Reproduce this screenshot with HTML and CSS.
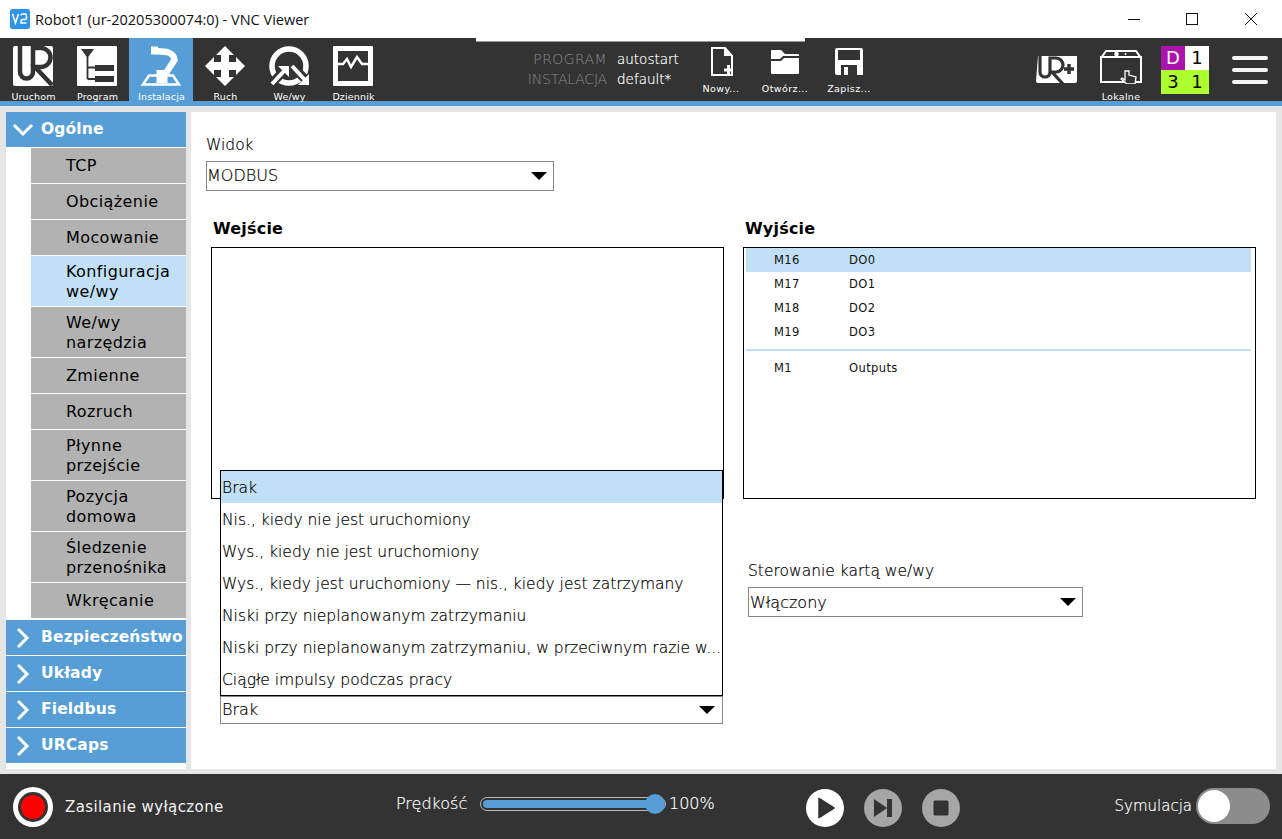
FILE: index.html
```html
<!DOCTYPE html>
<html lang="pl">
<head>
<meta charset="utf-8">
<title>Robot1 - VNC Viewer</title>
<link rel="stylesheet" href="styles.css">
</head>
<body>
<div class="window">
  <header class="titlebar">
    <svg class="vnc" viewBox="0 0 20 20"><rect width="20" height="20" rx="2.5" fill="#2f93e8"/><path d="M2.500 5l3 9 3-9" fill="none" stroke="#fff" stroke-width="1.600"/><path d="M11 6.500q0-1.500 1.500-1.500h2.500q1.500 0 1.500 1.500v2.500q0 1.500-1.500 1.500h-2.500q-1.500 0-1.500 1.500v2h5.500" fill="none" stroke="#fff" stroke-width="1.500"/></svg>
    <span class="wintitle">Robot1 (ur-20205300074:0) - VNC Viewer</span>
    <div class="winctl">
      <svg viewBox="0 0 12 12"><path d="M0 6.500h12" stroke="#111" fill="none"/></svg>
      <svg viewBox="0 0 12 12"><rect x=".5" y=".5" width="11" height="11" stroke="#111" fill="none"/></svg>
      <svg viewBox="0 0 12 12"><path d="M0 0l12 12M12 0L0 12" stroke="#111" fill="none"/></svg>
    </div>
  </header>

  <nav class="topbar">
    <div class="tab">
      <svg class="tabicon" viewBox="0 0 40 40"><rect width="40" height="40" rx="2" fill="#fff"/><path d="M7 0V26a6.500 6.500 0 0 0 13 0V2h8a9.500 9.500 0 0 1 0 19h-6l17 18" fill="none" stroke="#333" stroke-width="4.500"/></svg>
      <span>Uruchom</span>
    </div>
    <div class="tab">
      <svg class="tabicon" viewBox="0 0 40 40"><rect width="40" height="40" rx="1" fill="#fff"/><path d="M4 3h13l-6.500 9z" fill="#333"/><path d="M10.500 11v22M10.500 21.500h8M10.500 33h8" stroke="#333" stroke-width="1.800" fill="none"/><rect x="18" y="19" width="19" height="6" fill="#333"/><rect x="18" y="30" width="19" height="6" fill="#333"/></svg>
      <span>Program</span>
    </div>
    <div class="tab active">
      <svg class="tabicon" viewBox="0 0 40 40"><path d="M8 29.500h24l6 9H2z" fill="none" stroke="#fff" stroke-width="2.500"/><path d="M13.500 0.500v8" stroke="#fff" stroke-width="7" fill="none"/><path d="M14 5l12 1q7 2 7.500 8L25 27" stroke="#fff" stroke-width="6.500" fill="none"/><path d="M21 24v13" stroke="#fff" stroke-width="11" fill="none"/></svg>
      <span>Instalacja</span>
    </div>
    <div class="tab">
      <svg class="tabicon" viewBox="0 0 40 40"><path d="M20 0l9 9h-5v7h7v-5l9 9-9 9v-5h-7v7h5l-9 9-9-9h5v-7H9v5l-9-9 9-9v5h7V9h-5z" fill="#fff"/></svg>
      <span>Ruch</span>
    </div>
    <div class="tab">
      <svg class="tabicon" viewBox="0 0 40 40"><circle cx="20" cy="20" r="17" fill="none" stroke="#fff" stroke-width="5.500"/><path d="M3 37l13-13M23 20l13 13" stroke="#333" stroke-width="9" fill="none"/><path d="M3 38l13-14M23 20l13 14" stroke="#fff" stroke-width="4" fill="none"/><path d="M9 20h11v11zM40 39H29l11-11z" fill="#fff"/></svg>
      <span>We/wy</span>
    </div>
    <div class="tab">
      <svg class="tabicon" viewBox="0 0 40 40"><rect width="40" height="40" rx="1" fill="#fff"/><rect x="5" y="5" width="30" height="30" fill="#333"/><path d="M5 18h5l4-5 4 8 6-10 5 7h6" fill="none" stroke="#fff" stroke-width="2.500"/></svg>
      <span>Dziennik</span>
    </div>

    <div class="files">
      <div class="filenames">
        <span class="fk wide">PROGRAM</span><span class="fv">autostart</span>
        <span class="fk">INSTALACJA</span><span class="fv">default*</span>
      </div>
      <div class="fbtn">
        <svg viewBox="0 0 28 30"><path d="M5 1h13l7 8v19H5z" fill="none" stroke="#fff" stroke-width="2"/><path d="M17 1v8h8z" fill="#fff"/><path d="M17 23h9M21.500 18v11" stroke="#fff" stroke-width="3"/></svg>
        <span>Nowy...</span>
      </div>
      <div class="fbtn">
        <svg viewBox="0 0 28 30"><path d="M0 4q0-1 1-1h9l4 4h13q1 0 1 1v1H12l-3 3H0z" fill="#fff"/><path d="M0 14h10l3-3h15v15q0 1-1 1H1q-1 0-1-1z" fill="#fff"/></svg>
        <span>Otwórz...</span>
      </div>
      <div class="fbtn">
        <svg viewBox="0 0 28 30"><path d="M2 1h24q2 0 2 2v25H2q-2 0-2-2V3q0-2 2-2z" fill="#fff"/><rect x="3" y="3" width="22" height="10" fill="#333"/><rect x="6" y="18" width="16" height="10" fill="#333"/><rect x="9" y="20" width="4" height="8" fill="#fff"/></svg>
        <span>Zapisz...</span>
      </div>
    </div>

    <div class="rightctl">
      <svg class="urplus" viewBox="0 0 41 27"><path d="M2 0h39v25q0 2-2 2H2q-2 0-2-2z" fill="#fff"/><path d="M4 0V16a5 5 0 0 0 10 0V2h6a7 7 0 0 1 0 14h-4l11 12" fill="none" stroke="#333" stroke-width="3.200"/><path d="M33 8v10M28 13h10" stroke="#333" stroke-width="3.500"/></svg>
      <div class="local">
        <svg viewBox="0 0 42 34"><path d="M1 8L6 1h30l5 7" fill="none" stroke="#fff" stroke-width="2"/><rect x="1" y="7" width="40" height="25" fill="none" stroke="#fff" stroke-width="2"/><circle cx="16.500" cy="4" r="2.300" fill="#fff"/><circle cx="25.500" cy="4" r="1" fill="#fff"/><path d="M25 21v9l-3-2-1 1 6 5h8l1-7-7-2v-4z" fill="#333" stroke="#fff" stroke-width="1.300"/></svg>
        <span>Lokalne</span>
      </div>
      <div class="status">
        <span class="s-d">D</span><span class="s-w">1</span><span class="s-g">3</span><span class="s-g">1</span>
      </div>
      <div class="burger"><i></i><i></i><i></i></div>
    </div>
    <div class="vncbar"></div>
  </nav>
  <div class="strip"></div>

  <main class="main">
    <aside class="sidebar">
      <div class="group"><svg viewBox="0 0 22 14"><path d="M2 2l9 9 9-9" fill="none" stroke="#fff" stroke-width="3"/></svg>Ogólne</div>
      <div class="item">TCP</div>
      <div class="item">Obciążenie</div>
      <div class="item">Mocowanie</div>
      <div class="item tall sel">Konfiguracja<br>we/wy</div>
      <div class="item tall">We/wy<br>narzędzia</div>
      <div class="item">Zmienne</div>
      <div class="item">Rozruch</div>
      <div class="item tall">Płynne<br>przejście</div>
      <div class="item tall">Pozycja<br>domowa</div>
      <div class="item tall">Śledzenie<br>przenośnika</div>
      <div class="item">Wkręcanie</div>
      <div class="group first"><svg class="closed" viewBox="0 0 14 22"><path d="M2 2l9 9-9 9" fill="none" stroke="#fff" stroke-width="3"/></svg>Bezpieczeństwo</div>
      <div class="group"><svg class="closed" viewBox="0 0 14 22"><path d="M2 2l9 9-9 9" fill="none" stroke="#fff" stroke-width="3"/></svg>Układy</div>
      <div class="group"><svg class="closed" viewBox="0 0 14 22"><path d="M2 2l9 9-9 9" fill="none" stroke="#fff" stroke-width="3"/></svg>Fieldbus</div>
      <div class="group"><svg class="closed" viewBox="0 0 14 22"><path d="M2 2l9 9-9 9" fill="none" stroke="#fff" stroke-width="3"/></svg>URCaps</div>
    </aside>

    <section class="content">
      <label class="lbl">Widok</label>
      <div class="combo view">MODBUS<b class="arrow"></b></div>
      <div class="cols">
        <div class="col left">
          <h2>Wejście</h2>
          <div class="listbox"></div>
          <div class="combo under">Brak<b class="arrow"></b></div>
          <ul class="popup">
            <li class="hi">Brak</li>
            <li>Nis., kiedy nie jest uruchomiony</li>
            <li>Wys., kiedy nie jest uruchomiony</li>
            <li>Wys., kiedy jest uruchomiony — nis., kiedy jest zatrzymany</li>
            <li>Niski przy nieplanowanym zatrzymaniu</li>
            <li>Niski przy nieplanowanym zatrzymaniu, w przeciwnym razie w...</li>
            <li>Ciągłe impulsy podczas pracy</li>
          </ul>
        </div>
        <div class="col right">
          <h2>Wyjście</h2>
          <div class="listbox out">
            <div class="row hi"><span>M16</span><span>DO0</span></div>
            <div class="row"><span>M17</span><span>DO1</span></div>
            <div class="row"><span>M18</span><span>DO2</span></div>
            <div class="row"><span>M19</span><span>DO3</span></div>
            <div class="sep"></div>
            <div class="row"><span>M1</span><span>Outputs</span></div>
          </div>
          <label class="lbl ctl">Sterowanie kartą we/wy</label>
          <div class="combo ctlbox">Włączony<b class="arrow"></b></div>
        </div>
      </div>
    </section>
  </main>

  <footer class="bottom">
    <div class="power"><i></i></div>
    <span class="powertxt">Zasilanie wyłączone</span>
    <div class="speed">
      <span class="speedlbl">Prędkość</span>
      <div class="slider"><div class="fill"></div><div class="knob"></div></div>
      <span class="pct">100%</span>
    </div>
    <div class="play">
      <button class="pb on"><svg viewBox="0 0 38 38"><path d="M13 9.500l15 9.500-15 9.500z" fill="#333" stroke="#333" stroke-width="1.500" stroke-linejoin="round"/></svg></button>
      <button class="pb"><svg viewBox="0 0 38 38"><path d="M10 10l13 9-13 9z" fill="#333"/><rect x="23" y="10" width="5" height="18" fill="#333"/></svg></button>
      <button class="pb"><svg viewBox="0 0 38 38"><rect x="11.500" y="11.500" width="15" height="15" rx="1.500" fill="#333"/></svg></button>
    </div>
    <div class="sim"><span>Symulacja</span><div class="toggle"><i></i></div></div>
  </footer>
</div>
</body>
</html>
```
FILE: styles.css
```css
* { box-sizing: border-box; }
html, body { margin: 0; padding: 0; }
body { width: 1282px; height: 839px; overflow: hidden; font-family: "DejaVu Sans", sans-serif; color: #000; }
.window { width: 1282px; height: 839px; display: flex; flex-direction: column; background: #e6e6e6; }

.titlebar { height: 38px; background: #fff; display: flex; align-items: center; padding-left: 10px; }
.vnc { width: 20px; height: 20px; }
.wintitle { margin-left: 5px; font: 14.500px "Open Sans", sans-serif; color: #111; }
.winctl { margin-left: auto; display: flex; gap: 47px; padding-right: 25px; }
.winctl svg { width: 12px; height: 12px; display: block; }
.winctl svg:first-child { margin-right: -1px; }

.topbar { height: 63px; background: #333; display: flex; padding-left: 1px; position: relative; }
.vncbar { position: absolute; left: 476px; top: 0; width: 329px; height: 4px; background: #fff; border-bottom: 1px solid #999; }
.tab { width: 64px; height: 64px; display: flex; flex-direction: column; align-items: center; color: #fff; font-size: 9.500px; letter-spacing: .15px; padding-top: 8px; position: relative; }
.tab span { position: absolute; top: 53px; left: 1px; right: 0; text-align: center; line-height: 12px; }
.tabicon { width: 40px; height: 40px; display: block; }
.tab.active { background: #569ed5; }

.files { display: flex; margin-left: 108px; }
.filenames { display: grid; grid-template-columns: 114px auto; column-gap: 10px; font-size: 14px; font-weight: 200; line-height: 20px; padding-top: 11px; width: 196px; align-content: start; }
.fk { color: #8c8c8c; text-align: right; font-weight: 200; letter-spacing: -.2px; }
.fk.wide { letter-spacing: .4px; }
.fv { color: #fff; font-weight: 200; font-size: 13.500px; -webkit-text-stroke: .2px #fff; }
.fbtn { width: 64px; display: flex; flex-direction: column; align-items: center; color: #fff; font-size: 9.500px; letter-spacing: .4px; padding-top: 9px; }
.fbtn svg { width: 28px; height: 30px; display: block; }
.fbtn span { margin-top: 6px; line-height: 12px; }

.rightctl { position: absolute; right: 0; top: 0; width: 246px; height: 63px; display: flex; }
.urplus { width: 41px; height: 27px; margin: 18px 0 0 0; display: block; }
.local { width: 42px; margin-left: 23px; padding-top: 12px; color: #fff; font-size: 9.500px; display: flex; flex-direction: column; align-items: center; }
.local svg { width: 42px; height: 34px; display: block; flex: none; }
.local span { margin-top: 7px; line-height: 12px; letter-spacing: .3px; }
.status { width: 48px; height: 48px; margin: 8px 0 0 19px; display: grid; grid-template-columns: 24px 24px; grid-auto-rows: 24px; font-size: 18px; text-align: center; line-height: 24px; }
.s-d { background: #ac12ac; color: #fff; }
.s-w { background: #fff; color: #000; }
.s-g { background: #adff2f; color: #000; }
.burger { width: 36px; margin: 18px 0 0 23px; display: flex; flex-direction: column; gap: 8px; }
.burger i { display: block; height: 4px; border-radius: 2px; background: #f4f4f4; }

.strip { height: 5px; background: #569ed5; }

.main { flex: 1; min-height: 0; display: flex; gap: 5px; padding: 6px 6px 5px; }
.sidebar { width: 180px; background: #fff; flex: none; display: flex; flex-direction: column; align-items: stretch; }
.group { height: 35px; background: #569ed5; color: #fff; font-size: 15.500px; font-weight: 700; display: flex; align-items: center; padding: 0 0 2px 35px; margin-bottom: 1px; position: relative; letter-spacing: .15px; white-space: nowrap; }
.group.first { margin-top: 1px; }
.group svg { position: absolute; left: 6px; top: 11px; width: 22px; height: 14px; }
.group svg.closed { left: 10px; top: 7px; width: 14px; height: 22px; }
.item { height: 35px; margin: 0 0 1px 25px; background: #b2b2b2; color: #000; font-size: 16px; line-height: 20px; padding-left: 35px; display: flex; align-items: center; letter-spacing: .4px; }
.item.tall { height: 50px; display: block; padding-top: 6px; }
.item.sel { background: #c2e0f5; }

.content { flex: 1; background: #fff; padding: 23px 0 0 15px; position: relative; }
.lbl { display: block; font-size: 15.500px; font-weight: 200; line-height: 20px; color: #000; -webkit-text-stroke: .2px #000; }
.combo { position: relative; border: 1px solid #888; background: #fff; font-size: 16px; font-weight: 200; display: flex; align-items: center; padding: 0 0 2px 1px; color: #000; -webkit-text-stroke: .2px #000; }
.arrow { position: absolute; right: 6px; top: 50%; margin-top: -4px; width: 0; height: 0; border-style: solid; border-width: 8px 8px 0; border-color: #000 transparent transparent; }
.view { width: 348px; height: 30px; margin-top: 6px; padding-left: 0; padding-bottom: 1px; }
.cols { display: flex; margin-top: 28px; padding-left: 5px; }
.col { width: 513px; position: relative; }
.col.right { margin-left: 19px; }
.col h2 { margin: 0 0 8px 2px; font-size: 16px; font-weight: 700; line-height: 20px; letter-spacing: .2px; color: #000; }
.listbox { height: 252px; border: 1px solid #000; background: #fff; }
.under { width: 503px; height: 28px; margin: 197px 0 0 9px; }
.under .arrow { right: 7px; }
.popup { position: absolute; left: 9px; top: 251px; width: 503px; height: 226px; margin: 0; padding: 0; list-style: none; background: #fff; border: 1px solid #000; font-size: 15.500px; font-weight: 200; white-space: nowrap; overflow: hidden; color: #000; -webkit-text-stroke: .2px #000; }
.popup li { height: 32px; line-height: 34px; padding-left: 1px; }
.popup li.hi { background: #c2e0f5; }

.out { padding: 0 4px 0 2px; }
.row { height: 24px; display: flex; align-items: center; font-size: 11.500px; letter-spacing: .4px; padding-left: 28px; color: #111; }
.row span:first-child { width: 75px; }
.row.hi { background: #c2e0f5; }
.sep { height: 2px; margin: 5px 0 5px; background: #c2e0f5; }
.lbl.ctl { margin: 62px 0 0 5px; }
.ctlbox { width: 335px; height: 30px; margin: 6px 0 0 5px; padding-bottom: 0; }

.bottom { height: 65px; background: #333; flex: none; display: flex; align-items: center; position: relative; padding-left: 13px; }
.power { width: 40px; height: 40px; border-radius: 50%; background: #fff; display: flex; align-items: center; justify-content: center; flex: none; }
.power i { width: 30px; height: 30px; border-radius: 50%; background: #f00; border: 3px solid #333; display: block; }
.powertxt { color: #f2f2f2; font-size: 15px; letter-spacing: .4px; margin-left: 12px; white-space: nowrap; width: 171px; }
.speed { margin: -6px 0 0 160px; display: flex; align-items: center; color: #fff; font-weight: 200; font-size: 16px; width: 0; position: relative; -webkit-text-stroke: .2px #fff; }
.speedlbl { width: 84px; flex: none; }
.slider { width: 186px; height: 14px; border: 1px solid #bbb; border-radius: 7px; position: relative; flex: none; }
.fill { position: absolute; inset: 2px; background: #569ed5; border-radius: 4px; }
.knob { position: absolute; right: 0; top: -4px; width: 20px; height: 20px; border-radius: 50%; background: #569ed5; }
.pct { margin-left: 3px; flex: none; }
.play { position: absolute; left: 806px; top: 15px; display: flex; gap: 20px; }
.pb { width: 38px; height: 38px; padding: 0; border: 0; border-radius: 50%; background: #a6a6a6; display: block; }
.pb.on { background: #fff; }
.pb svg { display: block; width: 38px; height: 38px; }
.sim { position: absolute; right: 12px; top: 14px; display: flex; align-items: center; color: #fff; font-weight: 200; font-size: 15px; gap: 4px; -webkit-text-stroke: .2px #fff; }
.toggle { width: 74px; height: 36px; border-radius: 18px; background: #8c8c8c; padding: 2px; }
.toggle i { display: block; width: 32px; height: 32px; border-radius: 50%; background: #fff; }
```
